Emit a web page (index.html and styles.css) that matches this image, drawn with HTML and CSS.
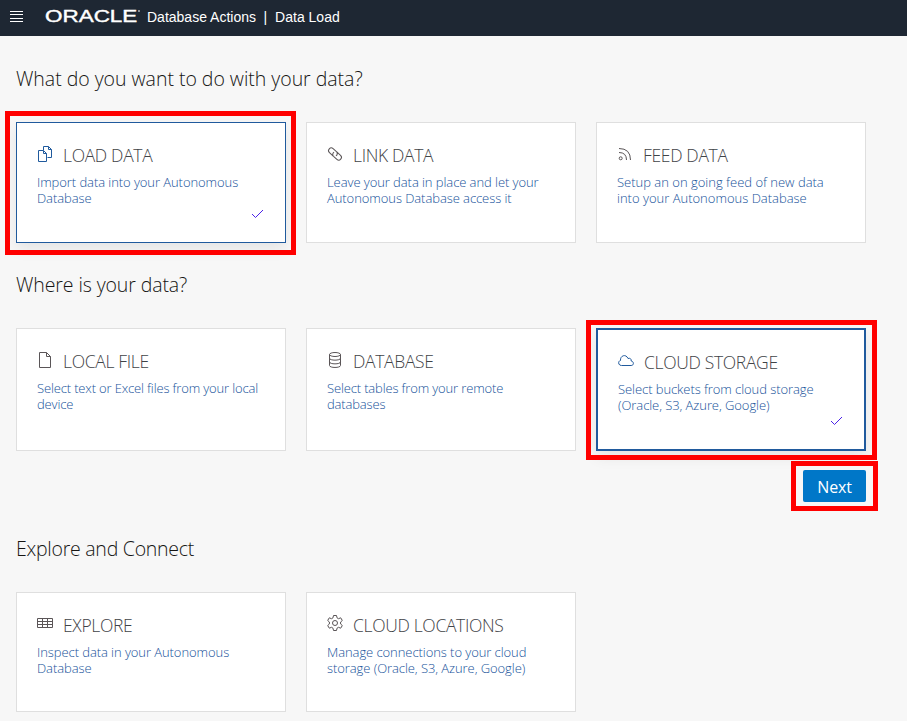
FILE: index.html
```html
<!DOCTYPE html>
<html lang="en">
<head>
<meta charset="utf-8">
<title>Data Load</title>
<link rel="stylesheet" href="styles.css">
</head>
<body>
<header class="topbar">
  <svg class="menu" viewBox="0 0 13 11"><path d="M0 .5h13M0 3.500h13M0 7.500h13M0 10.500h13"/></svg>
  <span class="logo"><span class="logo-text">ORACLE</span></span>
  <span class="app">Database Actions</span><span class="bar">|</span><span class="page">Data Load</span>
</header>
<main>
  <section class="actions">
    <h2>What do you want to do with your data?</h2>
    <div class="cards">
      <article class="card selected marked">
        <div class="title"><svg class="icon" viewBox="0 0 16 16"><path d="M1.500 4.500h5l3 3v8h-8zM6.500 4.500v3h3M6.500 4V.5h5l3 3v8h-4M11.500 .5v3h3"/></svg><h3>LOAD DATA</h3></div>
        <p>Import data into your Autonomous<br>Database</p>
        <svg class="check" viewBox="0 0 13 10"><path d="M1 5l3.500 3.500L12 1"/></svg>
      </article>
      <article class="card">
        <div class="title"><svg class="icon" viewBox="0 0 16 16"><g transform="rotate(42 8 8)"><path d="M8 10.700H3a2.700 2.700 0 0 1 0-5.400h4.500a2.700 2.700 0 0 1 2.500 3.500M8 5.300h5a2.700 2.700 0 0 1 0 5.400H8.500A2.700 2.700 0 0 1 6 7.200"/></g></svg><h3>LINK DATA</h3></div>
        <p>Leave your data in place and let your<br>Autonomous Database access it</p>
      </article>
      <article class="card feed">
        <div class="title"><svg class="icon" viewBox="0 0 16 16"><circle cx="3.700" cy="12.300" r="1.500"/><path d="M2 6.500q7.500 0 7.500 7.500M2 2.500q11.500 0 11.500 11.500"/></svg><h3>FEED DATA</h3></div>
        <p>Setup an on going feed of new data<br>into your Autonomous Database</p>
      </article>
    </div>
  </section>
  <section class="sources">
    <h2>Where is your data?</h2>
    <div class="cards">
      <article class="card local">
        <div class="title"><svg class="icon" viewBox="0 0 16 16"><path d="M2.500 .5h7l4 4v11h-11zM9.500 .5v4h4"/></svg><h3>LOCAL FILE</h3></div>
        <p>Select text or Excel files from your local<br>device</p>
      </article>
      <article class="card local">
        <div class="title"><svg class="icon" viewBox="0 0 16 16"><ellipse cx="8" cy="2.500" rx="5.500" ry="2"/><path d="M2.500 2.500v11c0 2.600 11 2.600 11 0v-11M2.500 6.200c0 2.600 11 2.600 11 0M2.500 9.900c0 2.600 11 2.600 11 0"/></svg><h3>DATABASE</h3></div>
        <p>Select tables from your remote<br>databases</p>
      </article>
      <article class="card current marked">
        <div class="title"><svg class="icon" viewBox="0 0 16 16"><path d="M3.500 12.500C0 12.500-.2 8 2.500 7.500 2 2.500 8 .5 10 5.500c2-.8 3.500.5 3.200 2.500 3 .5 2.800 4.500 0 4.500z"/></svg><h3>CLOUD STORAGE</h3></div>
        <p>Select buckets from cloud storage<br>(Oracle, S3, Azure, Google)</p>
        <svg class="check" viewBox="0 0 13 10"><path d="M1 5l3.500 3.500L12 1"/></svg>
      </article>
    </div>
    <div class="footer"><button class="next" type="button">Next</button></div>
  </section>
  <section class="explore">
    <h2>Explore and Connect</h2>
    <div class="cards">
      <article class="card">
        <div class="title"><svg class="icon" viewBox="0 0 16 16"><path d="M.5 3.500h15v9H.5zM0 6.500h16M0 9.500h16M5.500 3v10M10.500 3v10"/></svg><h3>EXPLORE</h3></div>
        <p>Inspect data in your Autonomous<br>Database</p>
      </article>
      <article class="card">
        <div class="title"><svg class="icon" viewBox="0 0 16 16"><circle cx="8" cy="8" r="2.500"/><path d="M6.500.5h3l.5 2.300 1.500.9 2.200-.9 1.600 2.700L13.600 7v2l1.700 1.500-1.600 2.700-2.200-.9-1.500.9-.5 2.300h-3L6 13.200l-1.500-.9-2.200.9L.7 10.500 2.400 9V7L.7 5.500l1.600-2.700 2.200.9L6 2.800z"/></svg><h3>CLOUD LOCATIONS</h3></div>
        <p>Manage connections to your cloud<br>storage (Oracle, S3, Azure, Google)</p>
      </article>
    </div>
  </section>
</main>
</body>
</html>
```
FILE: styles.css
```css
* { box-sizing: border-box; }
body {
  margin: 0;
  height: 721px;
  overflow: hidden;
  background: #f7f7f7;
  font-family: "Open Sans", "Noto Sans", sans-serif;
  font-weight: 300;
}
.topbar {
  display: flex;
  align-items: center;
  height: 36px;
  padding: 0 10px 2px;
  background: #1e2733;
  color: #fff;
  font: 400 14px/20px "Liberation Sans", sans-serif;
}
.menu { width: 13px; height: 11px; margin: 0 22px 2px 0; stroke: #fff; }
.logo { width: 102px; height: 20px; }
.logo-text {
  display: inline-block;
  font-size: 17px;
  transform: scaleX(1.32);
  transform-origin: left;
  -webkit-text-stroke: .4px #fff;
}
.logo::after {
  content: "";
  display: inline-block;
  width: 2px;
  height: 2px;
  margin: 0 0 10px 23px;
  border-radius: 1px;
  background: #aeb3b9;
}
.bar { margin: 0 8px 0 7.500px; }
main { padding: 28px 16px 0; }
h2 {
  margin: 0;
  height: 58px;
  font-size: 19.5px;
  line-height: 30px;
  font-weight: 330;
  color: #161513;
}
.actions h2 { letter-spacing: -.03px; }
.sources h2 { letter-spacing: -.1px; }
.explore h2 { letter-spacing: -.25px; }
.cards { display: grid; grid-template-columns: repeat(3, 270px); gap: 20px; }
.card {
  position: relative;
  height: 121px;
  padding: 22px 20px;
  border: 1px solid #dfdfdf;
  background: #fff;
}
.sources .card { height: 123px; }
.explore .card { height: 120px; }
.selected { border-color: #205a9d; box-shadow: 0 6px 14px rgba(0, 0, 0, .08); }
.current { border: 2px solid #205a9d; box-shadow: 0 6px 14px rgba(0, 0, 0, .08); }
.title { display: flex; gap: 10px; height: 29px; }
.icon { width: 16px; height: 16px; margin-top: 1px; fill: none; stroke: #5a5557; overflow: visible; }
.explore .icon { margin-top: 0; }
.selected .icon, .current .icon { stroke: #205a9d; }
h3 {
  margin: 0;
  font-size: 17.5px;
  line-height: 20px;
  font-weight: 330;
  letter-spacing: -.33px;
  color: #3f4347;
  white-space: nowrap;
}
p {
  margin: 0;
  font-size: 13px;
  line-height: 16px;
  font-weight: 350;
  letter-spacing: -.07px;
  color: #16529a;
  white-space: nowrap;
}
.feed p { letter-spacing: 0; }
.local p { letter-spacing: -.15px; }
.check { position: absolute; right: 21px; bottom: 23px; width: 13px; height: 10px; fill: none; stroke: #4a22e8; }
.marked::after { content: ""; position: absolute; border: 5px solid #f00; }
.selected::after { inset: -12px -11px -13px -12px; }
.current::after { inset: -10px -13px -11px -12px; }
.sources { margin-top: 27px; }
.footer { display: flex; width: 850px; justify-content: flex-end; padding-top: 19px; }
.next {
  position: relative;
  width: 63px;
  height: 32px;
  padding: 2px 0 0;
  border: 0;
  border-radius: 2px;
  background: #0077c8;
  color: #fff;
  font: 400 16px/30px "Open Sans", sans-serif;
  letter-spacing: -.2px;
}
.next::after { content: ""; position: absolute; inset: -9px -12px; border: 5px solid #f00; }
.explore { margin-top: 32px; }
```
